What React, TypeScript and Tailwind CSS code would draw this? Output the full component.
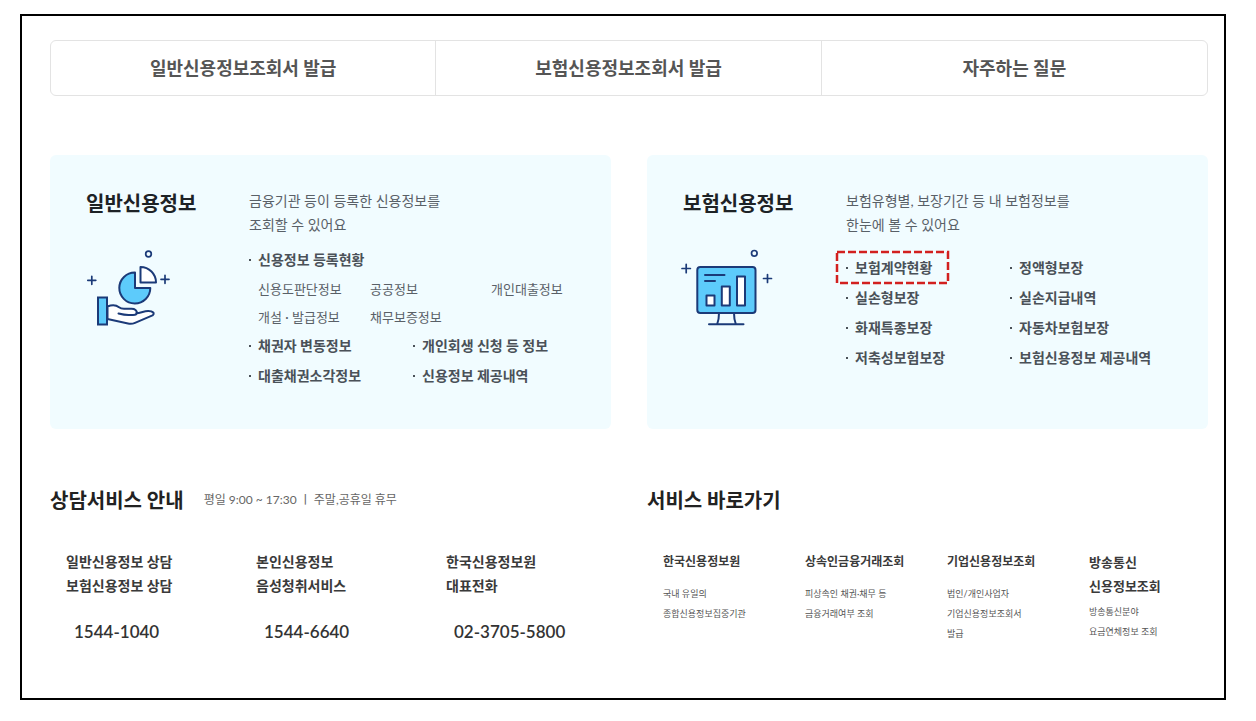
import type { ReactNode } from "react";

type Shortcut = {
  title: string[];
  desc: string[];
};

const tabs = ["일반신용정보조회서 발급", "보험신용정보조회서 발급", "자주하는 질문"];

const insuranceLinks = [
  "보험계약현황",
  "정액형보장",
  "실손형보장",
  "실손지급내역",
  "화재특종보장",
  "자동차보험보장",
  "저축성보험보장",
  "보험신용정보 제공내역",
];

const contacts = [
  { lines: ["일반신용정보 상담", "보험신용정보 상담"], phone: "1544-1040" },
  { lines: ["본인신용정보", "음성청취서비스"], phone: "1544-6640" },
  { lines: ["한국신용정보원", "대표전화"], phone: "02-3705-5800" },
];

const shortcuts: Shortcut[] = [
  { title: ["한국신용정보원"], desc: ["국내 유일의", "종합신용정보집중기관"] },
  { title: ["상속인금융거래조회"], desc: ["피상속인 채권·채무 등", "금융거래여부 조회"] },
  { title: ["기업신용정보조회"], desc: ["법인/개인사업자", "기업신용정보조회서", "발급"] },
  { title: ["방송통신", "신용정보조회"], desc: ["방송통신분야", "요금연체정보 조회"] },
];

function HandChartIcon() {
  return (
    <svg viewBox="17 14 86 78" width="86" height="78" className="overflow-visible" fill="none" stroke="#1b3a78" strokeWidth="2" strokeLinecap="round" strokeLinejoin="round" aria-hidden>
      <circle cx="79.5" cy="19" r="2.8" strokeWidth="1.7" />
      <path d="M18.8 45.3h8M22.8 41.3v8M92 44.3h8M96 40.3v8" strokeWidth="1.7" />
      <path d="M66 37.5A15.5 15.5 0 1 0 81.3 53H66Z" fill="#5dcbfb" />
      <path d="M71.5 32v15.5H87A15.5 15.5 0 0 0 71.5 32Z" fill="#fff" />
      <path d="M38.5 71.5c4-1.6 8.5-1.7 11.5.8 1.5 1.2 3 1.5 5 1.5h7.500c3.500 0 5.500 1.800 5.300 4.500 3.500-.3 7.500-2.300 11.400-2.300 5.200 0 6.800 2.600 4.300 4.300l-17.500 7.500c-2.500 1.100-4.500 1.200-7 .7l-20.500-4.500Z" fill="#fff" />
      <path d="M49.5 78.500c4 1 7 1.500 10 1.500h4.500c2.500 0 3.800-.7 3.800-2.500" />
      <path d="M29 62.500h9v27h-9z" fill="#5dcbfb" strokeLinejoin="miter" />
    </svg>
  );
}

function MonitorChartIcon() {
  return (
    <svg viewBox="14 14 86 78" width="86" height="78" className="overflow-visible" fill="none" stroke="#1b3a78" strokeWidth="2" strokeLinecap="round" strokeLinejoin="round" aria-hidden>
      <circle cx="85.3" cy="18.3" r="2.8" strokeWidth="1.7" />
      <path d="M13 33.5h8.4M17.2 29.3v8.4M94.5 43.5h8M98.5 39.5v8" strokeWidth="1.7" />
      <path d="M50 78c0 4-.4 7.5-1.8 11M65 78c0 4 .4 7.5 1.800 11M40 89.200h34.500" />
      <rect x="28.3" y="32" width="58.2" height="46" rx="3" fill="#5dcbfb" />
      <path d="M36 40h19.5M36 46h10" />
      <path d="M37.5 60.5h8v10h-8zM52.8 51.5h8v19h-8zM68 41.5h8v29h-8z" fill="#fff" />
    </svg>
  );
}

function BulletLink({ children }: { children: ReactNode }) {
  return (
    <a href="#" className="relative inline-flex items-center gap-[7px] text-sm leading-[30px] font-bold whitespace-nowrap text-[#4a5158]">
      <span className="size-[2px] bg-[#4a5158]" />
      {children}
    </a>
  );
}

function InfoCard({ title, icon, desc, children }: { title: string; icon: ReactNode; desc: string[]; children: ReactNode }) {
  return (
    <section className="flex rounded-md bg-[#f1fcff] px-9 pt-[34px] pb-[38px]">
      <div className="w-[163px] shrink-0">
        <h2 className="mb-8 text-xl leading-7 font-bold text-[#1d2226]">{title}</h2>
        {icon}
      </div>
      <div className="min-w-0 flex-1">
        <p className="text-sm leading-6 text-[#596067]">
          {desc.map((line) => (
            <span key={line} className="block">{line}</span>
          ))}
        </p>
        {children}
      </div>
    </section>
  );
}

// Dashed outline over the link that is being pointed out
function Highlight() {
  return (
    <svg className="absolute -top-[2px] -left-[10px] h-[33px] w-[113px] overflow-visible" fill="none" aria-hidden>
      <rect x="1" y="1" width="111" height="31" stroke="#d2201f" strokeWidth="2.5" strokeDasharray="8 3" />
    </svg>
  );
}

export default function App() {
  return (
    <div className="bg-white pt-[14px] pr-[30px] pb-5 pl-5 font-['Lato','Noto_Sans_CJK_KR',sans-serif]">
      <main className="border-2 border-black pt-6 pr-4 pb-[54px] pl-7">
        {/* Tabs */}
        <nav className="grid grid-cols-3 divide-x divide-[#e3e3e3] rounded-md border border-[#e3e3e3]">
          {tabs.map((tab) => (
            <a key={tab} href="#" className="py-[13px] text-center text-lg leading-7 font-bold text-[#555]">
              {tab}
            </a>
          ))}
        </nav>

        {/* Info cards */}
        <div className="mt-[59px] grid grid-cols-2 gap-9">
          <InfoCard title="일반신용정보" icon={<HandChartIcon />} desc={["금융기관 등이 등록한 신용정보를", "조회할 수 있어요"]}>
            <ul className="mt-2">
              <li className="flex"><BulletLink>신용정보 등록현황</BulletLink></li>
            </ul>
            <ul className="grid grid-cols-[112px_121px_1fr] pl-[9px] text-[13px] leading-7 whitespace-nowrap text-[#596067]">
              <li>신용도판단정보</li>
              <li>공공정보</li>
              <li>개인대출정보</li>
              <li>개설 · 발급정보</li>
              <li>채무보증정보</li>
            </ul>
            <ul className="grid grid-cols-[164px_1fr]">
              <li className="flex"><BulletLink>채권자 변동정보</BulletLink></li>
              <li className="flex"><BulletLink>개인회생 신청 등 정보</BulletLink></li>
              <li className="flex"><BulletLink>대출채권소각정보</BulletLink></li>
              <li className="flex"><BulletLink>신용정보 제공내역</BulletLink></li>
            </ul>
          </InfoCard>

          <InfoCard title="보험신용정보" icon={<MonitorChartIcon />} desc={["보험유형별, 보장기간 등 내 보험정보를", "한눈에 볼 수 있어요"]}>
            <ul className="mt-4 grid grid-cols-[164px_1fr]">
              {insuranceLinks.map((label, i) => (
                <li key={label} className="flex">
                  <BulletLink>
                    {label}
                    {i === 0 && <Highlight />}
                  </BulletLink>
                </li>
              ))}
            </ul>
          </InfoCard>
        </div>

        <div className="mt-[57px] grid grid-cols-2 gap-9">
          {/* Contacts */}
          <section>
            <div className="flex items-center gap-5">
              <h2 className="text-xl leading-7 font-bold text-[#222]">상담서비스 안내</h2>
              <p className="text-xs text-[#666]">평일 9:00 ~ 17:30 ㅣ 주말,공휴일 휴무</p>
            </div>
            <ul className="mt-9 grid grid-cols-[190px_190px_1fr] pl-4">
              {contacts.map(({ lines, phone }) => (
                <li key={phone}>
                  <h3 className="text-sm leading-6 font-bold text-[#3a3a3a]">
                    {lines.map((line) => (
                      <span key={line} className="block">{line}</span>
                    ))}
                  </h3>
                  <a href={`tel:${phone}`} className="mt-[22px] block pl-2 text-[17px] leading-6 font-semibold text-[#333]">{phone}</a>
                </li>
              ))}
            </ul>
          </section>

          {/* Shortcuts */}
          <section>
            <h2 className="text-xl leading-7 font-bold text-[#222]">서비스 바로가기</h2>
            <ul className="mt-9 grid grid-cols-[142px_142px_142px_1fr] pl-4">
              {shortcuts.map(({ title, desc }) => (
                <li key={title[0]}>
                  <a href="#" className="block">
                    <h3 className={`leading-6 font-bold text-[#3a3a3a] ${title.length > 1 ? "mb-1 text-[13px]" : "mb-[10px] text-xs"}`}>
                      {title.map((line) => (
                        <span key={line} className="block">{line}</span>
                      ))}
                    </h3>
                    <p className="text-[9px] leading-5 text-[#555]">
                      {desc.map((line) => (
                        <span key={line} className="block">{line}</span>
                      ))}
                    </p>
                  </a>
                </li>
              ))}
            </ul>
          </section>
        </div>
      </main>
    </div>
  );
}
